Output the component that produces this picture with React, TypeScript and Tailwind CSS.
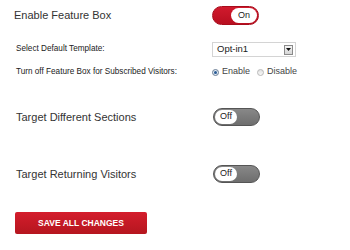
import React from "react";

function Toggle({ on }: { on: boolean }) {
  if (on) {
    return (
      <div className="flex h-[19px] w-[47px] justify-end rounded-full border border-[#a80d1c] bg-gradient-to-b from-[#d11a2d] to-[#b80f20] p-[1px]">
        <div className="flex h-full w-[26px] items-center justify-center rounded-full bg-white text-[9px] text-[#222]">
          On
        </div>
      </div>
    );
  }
  return (
    <div className="flex h-[18px] w-[47px] justify-start rounded-full border border-[#555] bg-gradient-to-b from-[#888] to-[#6e6e6e] p-[1px]">
      <div className="flex h-full w-[22px] items-center justify-center rounded-full bg-white text-[9px] text-[#222]">
        Off
      </div>
    </div>
  );
}

function Radio({ checked, label }: { checked: boolean; label: string }) {
  return (
    <label className="flex items-center gap-[3px]">
      <span
        className={
          checked
            ? "flex h-[7px] w-[7px] items-center justify-center rounded-full border border-[#6d7f95] bg-[#dfe9f3]"
            : "h-[7px] w-[7px] rounded-full border border-[#b8b8b8] bg-gradient-to-b from-[#e2e2e2] to-[#f8f8f8]"
        }
      >
        {checked && <span className="h-[3px] w-[3px] rounded-full bg-[#2a5b94]" />}
      </span>
      <span className="text-[9px] text-[#444]">{label}</span>
    </label>
  );
}

export default function App() {
  return (
    <div className="h-[250px] w-[350px] bg-white pl-[14px] font-['Liberation_Sans',Arial,sans-serif] text-[#333]">
      <div className="flex h-[19px] items-center pt-0 mt-[6px]">
        <div className="w-[198px] text-[11px]">Enable Feature Box</div>
        <Toggle on />
      </div>

      <div className="mt-[17px] flex h-[15px] items-center">
        <div className="w-[198px] pl-[2px] text-[8.2px] text-[#222]">Select Default Template:</div>
        <div className="flex h-[15px] w-[84px] items-center justify-between border border-[#d4d4d4] bg-white pl-[4px] pr-[2px]">
          <span className="text-[9.5px] text-[#222]">Opt-in1</span>
          <span className="flex h-[10px] w-[9px] items-center justify-center border border-[#8a8a8a] bg-gradient-to-b from-[#f4f4f4] to-[#d6d6d6]">
            <svg width="5" height="3" viewBox="0 0 5 3">
              <path d="M0 0h5L2.5 3z" fill="#111" />
            </svg>
          </span>
        </div>
      </div>

      <div className="mt-[10px] flex h-[10px] items-center">
        <div className="w-[198px] pl-[2px] text-[8.2px] text-[#222]">
          Turn off Feature Box for Subscribed Visitors:
        </div>
        <div className="flex items-center gap-[7px]">
          <Radio checked label="Enable" />
          <Radio checked={false} label="Disable" />
        </div>
      </div>

      <div className="mt-[31px] flex h-[18px] items-center">
        <div className="w-[199px] pl-[2px] text-[11px]">Target Different Sections</div>
        <Toggle on={false} />
      </div>

      <div className="mt-[39px] flex h-[18px] items-center">
        <div className="w-[199px] pl-[2px] text-[11px]">Target Returning Visitors</div>
        <Toggle on={false} />
      </div>

      <button className="ml-[1px] mt-[29px] flex h-[22px] w-[132px] items-center justify-center rounded-[2px] bg-gradient-to-b from-[#d41d2c] to-[#b5161f] text-[8.5px] font-bold text-white">
        SAVE ALL CHANGES
      </button>
    </div>
  );
}
